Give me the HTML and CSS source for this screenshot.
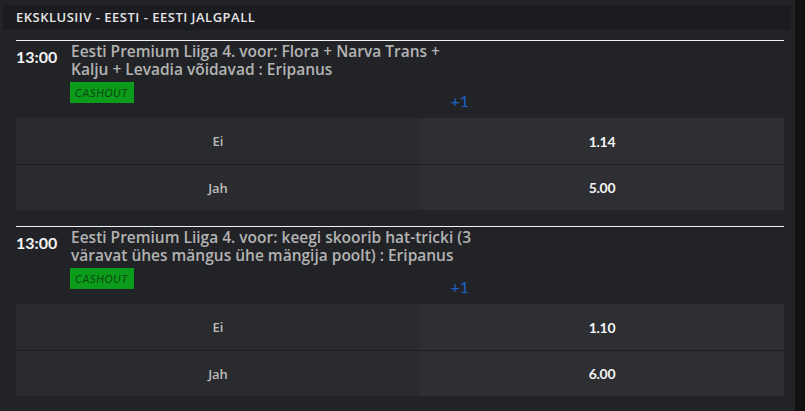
FILE: index.html
```html
<!DOCTYPE html>
<html>
<head>
<meta charset="utf-8">
<link rel="stylesheet" href="styles.css">
</head>
<body>
<div class="page">
  <main class="panel">
    <div class="crumb">EKSKLUSIIV - EESTI - EESTI JALGPALL</div>
    <section class="event">
      <div class="head">
        <div class="time">13:00</div>
        <div class="info">
          <div class="title">Eesti Premium Liiga 4. voor: Flora + Narva Trans + Kalju + Levadia võidavad : Eripanus</div>
          <div class="tags">
            <span class="cashout">CASHOUT</span>
            <span class="more">+1</span>
          </div>
        </div>
      </div>
      <div class="odds">
        <div class="row"><div class="label">Ei</div><div class="price">1.14</div></div>
        <div class="row"><div class="label">Jah</div><div class="price">5.00</div></div>
      </div>
    </section>
    <section class="event">
      <div class="head">
        <div class="time">13:00</div>
        <div class="info">
          <div class="title">Eesti Premium Liiga 4. voor: keegi skoorib hat-tricki (3 väravat ühes mängus ühe mängija poolt) : Eripanus</div>
          <div class="tags">
            <span class="cashout">CASHOUT</span>
            <span class="more">+1</span>
          </div>
        </div>
      </div>
      <div class="odds">
        <div class="row"><div class="label">Ei</div><div class="price">1.10</div></div>
        <div class="row"><div class="label">Jah</div><div class="price">6.00</div></div>
      </div>
    </section>
  </main>
  <div class="strip"></div>
</div>
</body>
</html>
```
FILE: styles.css
```css
* { box-sizing: border-box; }
html, body {
  margin: 0;
  padding: 0;
  height: 100%;
  background: #222327;
  font-family: Lato, "Open Sans", sans-serif;
  overflow: hidden;
}
.page {
  display: flex;
  height: 411px;
}
.panel {
  width: 795px;
  flex: none;
  padding: 5px 4px 0 3px;
}
.strip {
  flex: 1;
  background: #111112;
}
.crumb {
  height: 25px;
  background: #1b1c1f;
  color: #e4e4e4;
  font-family: "Open Sans", sans-serif;
  font-size: 13px;
  font-weight: 600;
  letter-spacing: 0.5px;
  line-height: 25px;
  padding-left: 13px;
}
.event {
  margin: 10px 7px 0 13px;
  border-top: 1px solid #f2f2f2;
  padding-top: 1px;
}
.event + .event {
  margin-top: 16px;
}
.head {
  display: flex;
}
.time {
  width: 55px;
  flex: none;
  color: #f4f4f4;
  font-size: 16px;
  font-weight: 700;
  line-height: 18px;
  padding-top: 6px;
}
.info {
  width: 406px;
}
.title {
  color: #b3b3b3;
  font-family: "Open Sans", sans-serif;
  font-size: 15.5px;
  font-weight: 600;
  line-height: 18px;
}
.tags {
  display: flex;
  justify-content: space-between;
  align-items: flex-start;
  margin-top: 4px;
  height: 28px;
}
.cashout {
  display: inline-block;
  height: 21px;
  line-height: 21px;
  background: #0b9c1b;
  color: #0b4a10;
  font-size: 11px;
  font-style: italic;
  letter-spacing: 0.6px;
  padding: 0 6px 0 5px;
  margin-left: -1px;
}
.more {
  color: #1a63c9;
  font-size: 16px;
  line-height: 18px;
  padding-top: 10px;
  margin-right: 8px;
}
.odds {
  margin-top: 8px;
}
.row {
  display: flex;
  height: 46px;
}
.row + .row {
  border-top: 1px solid #1e1f22;
  height: 46px;
}
.label, .price {
  display: flex;
  align-items: center;
  justify-content: center;
}
.label {
  width: 404px;
  background: #2a2b2f;
  color: #bdbdbd;
  font-family: "Open Sans", sans-serif;
  font-size: 13px;
  font-weight: 600;
}
.price {
  flex: 1;
  background: #2e2f33;
  color: #f4f4f4;
  font-size: 14px;
  font-weight: 700;
  letter-spacing: -0.3px;
}
```
